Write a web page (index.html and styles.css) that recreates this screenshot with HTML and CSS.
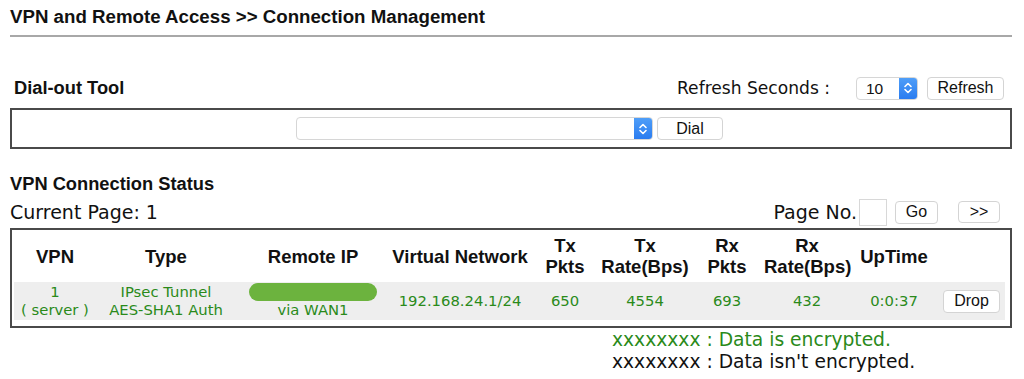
FILE: index.html
```html
<!DOCTYPE html>
<html>
<head>
<meta charset="utf-8">
<link rel="stylesheet" href="styles.css">
</head>
<body>
<div class="page">
  <h1 class="title">VPN and Remote Access &gt;&gt; Connection Management</h1>
  <div class="rule"></div>

  <div class="bar dial-bar">
    <h2 class="section">Dial-out Tool</h2>
    <div class="controls">
      <span class="label refresh-label">Refresh Seconds :</span>
      <div class="select small-select"><span class="val">10</span><span class="arrow"><svg width="10" height="14" viewBox="0 0 10 14"><path d="M2 5.5 L5 2.5 L8 5.5 M2 8.5 L5 11.5 L8 8.5" fill="none" stroke="#fff" stroke-width="1.6" stroke-linecap="round" stroke-linejoin="round"/></svg></span></div>
      <button class="btn refresh">Refresh</button>
    </div>
  </div>

  <div class="box dial-box">
    <div class="select wide-select"><span class="val"></span><span class="arrow"><svg width="10" height="14" viewBox="0 0 10 14"><path d="M2 5.5 L5 2.5 L8 5.5 M2 8.5 L5 11.5 L8 8.5" fill="none" stroke="#fff" stroke-width="1.6" stroke-linecap="round" stroke-linejoin="round"/></svg></span></div>
    <button class="btn dial">Dial</button>
  </div>

  <h2 class="section status-title">VPN Connection Status</h2>
  <div class="bar page-bar">
    <span class="label cur">Current Page: 1</span>
    <div class="controls">
      <span class="label pn">Page No.</span>
      <input class="pageno" type="text">
      <button class="btn go">Go</button>
      <button class="btn next">&gt;&gt;</button>
    </div>
  </div>

  <div class="box table-box">
    <table class="vpn">
      <colgroup>
        <col class="c1"><col class="c2"><col class="c3"><col class="c4"><col class="c5">
        <col class="c6"><col class="c7"><col class="c8"><col class="c9"><col class="c10">
      </colgroup>
      <thead>
        <tr>
          <th>VPN</th><th>Type</th><th>Remote IP</th><th>Virtual Network</th>
          <th>Tx<br>Pkts</th><th>Tx<br>Rate(Bps)</th><th>Rx<br>Pkts</th><th>Rx<br>Rate(Bps)</th>
          <th>UpTime</th><th></th>
        </tr>
      </thead>
      <tbody>
        <tr>
          <td>1<br>( server )</td>
          <td>IPsec Tunnel<br>AES-SHA1 Auth</td>
          <td><div class="ipbar"></div>via WAN1</td>
          <td>192.168.24.1/24</td>
          <td>650</td>
          <td>4554</td>
          <td>693</td>
          <td>432</td>
          <td>0:0:37</td>
          <td><button class="btn drop">Drop</button></td>
        </tr>
      </tbody>
    </table>
  </div>

  <div class="legend">
    <div class="enc">xxxxxxxx : Data is encrypted.</div>
    <div class="plain">xxxxxxxx : Data isn't encrypted.</div>
  </div>
</div>
</body>
</html>
```

FILE: styles.css
```css
html, body {
  margin: 0;
  padding: 0;
  background: #fff;
}
.page {
  padding: 0 12px 0 10px;
  font-family: "DejaVu Sans", Verdana, sans-serif;
  color: #111;
}
.title {
  margin: 0;
  padding-top: 6px;
  height: 21px;
  font: bold 18.7px/21px "Liberation Sans", Arial, sans-serif;
  color: #111;
}
.rule {
  margin-top: 8px;
  height: 2px;
  background: #a8a8a8;
}
.section {
  margin: 0;
  font: bold 18.3px/22px "Liberation Sans", Arial, sans-serif;
  color: #111;
}
.bar {
  display: flex;
  align-items: center;
  justify-content: space-between;
}
.dial-bar {
  margin-top: 39px;
  height: 24px;
  padding-left: 4px;
  padding-right: 8px;
}
.controls {
  display: flex;
  align-items: center;
}
.label {
  font-size: 16px;
  line-height: 20px;
  color: #111;
}
.refresh-label {
  font-size: 17.1px;
}
.select {
  display: flex;
  align-items: stretch;
  background: #fff;
  border: 1px solid #d6d6d6;
  border-radius: 4px;
  height: 21px;
  box-sizing: border-box;
  overflow: hidden;
}
.select .val {
  flex: 1;
  font: 15.5px/21px "Liberation Sans", Arial, sans-serif;
  padding-left: 9px;
  color: #111;
}
.select .arrow {
  width: 18px;
  background: linear-gradient(#4f9ef8, #2a7cf0);
  display: flex;
  align-items: center;
  justify-content: center;
}
.small-select {
  width: 62px;
  margin-left: 26px;
  height: 23px;
}
.btn {
  background: #fff;
  border: 1px solid #d4d4d4;
  border-radius: 4px;
  font: 16px/1 "Liberation Sans", Arial, sans-serif;
  color: #111;
  padding: 0;
  height: 23px;
  box-sizing: border-box;
}
.refresh {
  width: 77px;
  margin-left: 9px;
}
.box {
  border: 2px solid #4a4a4a;
  box-sizing: border-box;
}
.dial-box {
  margin-top: 8px;
  height: 41px;
  display: flex;
  align-items: center;
  padding-left: 284px;
}
.wide-select {
  width: 357px;
  height: 23px;
}
.dial {
  width: 66px;
  margin-left: 4px;
}
.status-title {
  margin-top: 24px;
}
.page-bar {
  margin-top: 3px;
  height: 28px;
  padding-right: 12px;
}
.cur {
  font-size: 19px;
  line-height: 24px;
}
.pn {
  font-size: 19px;
  line-height: 24px;
}
.pageno {
  width: 28px;
  height: 27px;
  box-sizing: border-box;
  border: 1px solid #d8d8d8;
  margin: 0 0 0 2px;
  padding: 0;
}
.go {
  width: 43px;
  margin-left: 8px;
}
.next {
  width: 42px;
  margin-left: 20px;
  height: 22px;
}
.table-box {
  margin-top: 2px;
  padding: 3px 6px 6px 2px;
}
.vpn {
  border-collapse: collapse;
  table-layout: fixed;
  width: 991px;
}
.c1 { width: 82px; }
.c2 { width: 140px; }
.c3 { width: 154px; }
.c4 { width: 140px; }
.c5 { width: 70px; }
.c6 { width: 90px; }
.c7 { width: 74px; }
.c8 { width: 86px; }
.c9 { width: 88px; }
.c10 { width: 67px; }
.vpn th {
  font: bold 18.5px/21px "Liberation Sans", Arial, sans-serif;
  color: #111;
  height: 46px;
  padding: 0;
  text-align: center;
  vertical-align: middle;
  white-space: nowrap;
}
.vpn thead tr {
  border-bottom: 3px solid #fff;
}
.vpn td {
  background: #eeeeee;
  color: #2a8a1a;
  font-size: 14.8px;
  line-height: 18px;
  text-align: center;
  vertical-align: middle;
  padding: 1px 0 1px;
  height: 35px;
  white-space: nowrap;
}
.ipbar {
  width: 128px;
  height: 18px;
  margin: 0 auto;
  border-radius: 9px;
  background: #6cb33e;
}
.drop {
  width: 57px;
  color: #111;
}
.legend {
  padding-left: 602px;
  margin-top: 1px;
  font-size: 18.7px;
  line-height: 22px;
}
.enc { color: #2a8a1a; }
.plain { color: #111; }
```
